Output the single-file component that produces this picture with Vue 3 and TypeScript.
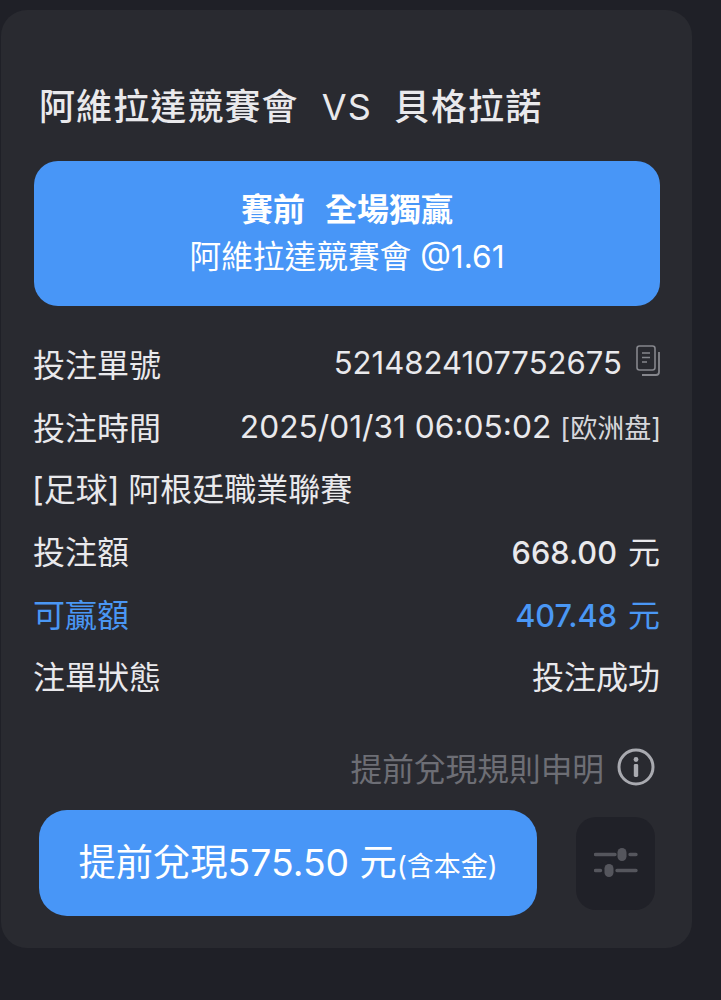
<script setup lang="ts">
interface Row {
  label: string
  value: string
  unit?: string
  accent?: boolean
}

const amounts: Row[] = [
  { label: '投注額', value: '668.00', unit: '元' },
  { label: '可贏額', value: '407.48', unit: '元', accent: true },
  { label: '注單狀態', value: '投注成功' },
]
</script>

<template>
  <div class="page">
    <section class="card">
      <h1 class="match">阿維拉達競賽會<span class="vs">VS</span>貝格拉諾</h1>

      <div class="pick">
        <p class="pick-type">賽前<span class="gap"></span>全場獨贏</p>
        <p class="pick-odds">阿維拉達競賽會 @1.61</p>
      </div>

      <div class="rows">
        <div class="row">
          <span>投注單號</span>
          <span class="order">
            5214824107752675
            <svg class="copy" width="24" height="32" viewBox="0 0 24 32" fill="none" stroke="#85868c" stroke-width="1.6">
              <rect x="1" y="1" width="18" height="24" rx="2.5" />
              <path d="M6 8h8M6 12.5h8M6 17h5" stroke-width="1.4" />
              <path d="M23 7v20a3 3 0 0 1-3 3H6" stroke-width="1.8" />
            </svg>
          </span>
        </div>
        <div class="row">
          <span>投注時間</span>
          <span class="time">2025/01/31 06:05:02<small>[欧洲盘]</small></span>
        </div>
        <div class="row league">[足球] 阿根廷職業聯賽</div>
        <div v-for="r in amounts" :key="r.label" class="row" :class="{ accent: r.accent }">
          <span>{{ r.label }}</span>
          <span v-if="r.unit" class="amount">{{ r.value }}<i class="unit">{{ r.unit }}</i></span>
          <span v-else>{{ r.value }}</span>
        </div>
      </div>

      <div class="rule">
        提前兌現規則申明
        <svg width="38" height="38" viewBox="0 0 38 38" fill="none">
          <circle cx="19" cy="19" r="17" stroke="#a9aab0" stroke-width="3" />
          <circle cx="19" cy="11.5" r="2.4" fill="#a9aab0" />
          <rect x="16.8" y="16" width="4.4" height="13" rx="1.4" fill="#a9aab0" />
        </svg>
      </div>

      <div class="actions">
        <button class="cashout">提前兌現575.50 元<small>(含本金)</small></button>
        <button class="tune" aria-label="設定">
          <svg width="44" height="30" viewBox="0 0 44 30" fill="none" stroke="#55565d" stroke-linecap="round">
            <path d="M1.5 6.5h19.5M36 6.5h6M1.5 22.5h5M23 22.5h19" stroke-width="3.4" />
            <rect x="23.5" y="0" width="9" height="13" rx="4.5" fill="#55565d" stroke="none" />
            <rect x="10.5" y="16" width="9" height="13" rx="4.5" fill="#55565d" stroke="none" />
          </svg>
        </button>
      </div>
    </section>
  </div>
</template>

<style scoped>
.page {
  box-sizing: border-box;
  width: 721px;
  height: 1000px;
  padding: 10px 0 0 1px;
  background: #1f2027;
  overflow: hidden;
  font-family: Inter, "Noto Sans CJK TC", sans-serif;
  color: #e9e9ec;
}
.card {
  box-sizing: border-box;
  width: 691px;
  height: 938px;
  padding: 74px 32px 0 33px;
  background: #292a30;
  border-radius: 26px;
}
.match {
  margin: 0 0 0 5px;
  font-size: 36px;
  line-height: 46px;
  font-weight: 500;
  letter-spacing: 1.1px;
  white-space: nowrap;
}
.vs {
  margin: 0 22px 0 23px;
  font-weight: 400;
}
.pick {
  margin-top: 31px;
  height: 145px;
  border-radius: 24px;
  background: #4896f7;
  color: #fff;
  display: flex;
  flex-direction: column;
  align-items: center;
  justify-content: center;
  gap: 5px;
}
.pick p {
  margin: 0;
  line-height: 42px;
}
.pick-type {
  font-size: 32px;
  font-weight: 700;
}
.gap {
  display: inline-block;
  width: 20px;
}
.pick-odds {
  font-size: 31.7px;
}
.rows {
  margin-top: 26px;
}
.row {
  display: flex;
  justify-content: space-between;
  align-items: center;
  height: 62.8px;
  font-size: 32px;
  white-space: nowrap;
}
.row > span:first-child {
  margin-left: -1px;
}
.league {
  justify-content: flex-start;
  margin: -2px 0 0 -2px;
}
.order {
  display: flex;
  align-items: center;
  gap: 14px;
  font-size: 31.1px;
}
.copy {
  margin-top: -5px;
}
.time {
  margin-right: -1px;
  font-size: 31.7px;
}
.time small {
  margin-left: 9px;
  font-size: 27px;
  color: #d6d6da;
}
.amount {
  font-size: 30.7px;
  font-weight: 500;
}
.unit {
  margin-left: 11px;
  font-size: 32px;
  font-style: normal;
  font-weight: 400;
}
.accent {
  color: #4a97f4;
}
.rule {
  display: flex;
  justify-content: flex-end;
  align-items: center;
  gap: 13px;
  margin-top: 40px;
  padding-right: 5px;
  height: 40px;
  font-size: 31.7px;
  color: #6d6e75;
}
.actions {
  display: flex;
  align-items: center;
  margin-top: 23px;
}
.cashout {
  width: 498px;
  height: 106px;
  margin-left: 5px;
  border: 0;
  border-radius: 28px;
  background: #4896f7;
  color: #fff;
  font: inherit;
  font-size: 37.3px;
  white-space: nowrap;
  padding: 0 0 5px;
}
.cashout small {
  font-size: 27px;
}
.tune {
  display: flex;
  align-items: center;
  justify-content: center;
  width: 79px;
  height: 93px;
  margin: 1px 0 0 39px;
  border: 0;
  padding: 0;
  border-radius: 20px;
  background: #202128;
}
</style>
